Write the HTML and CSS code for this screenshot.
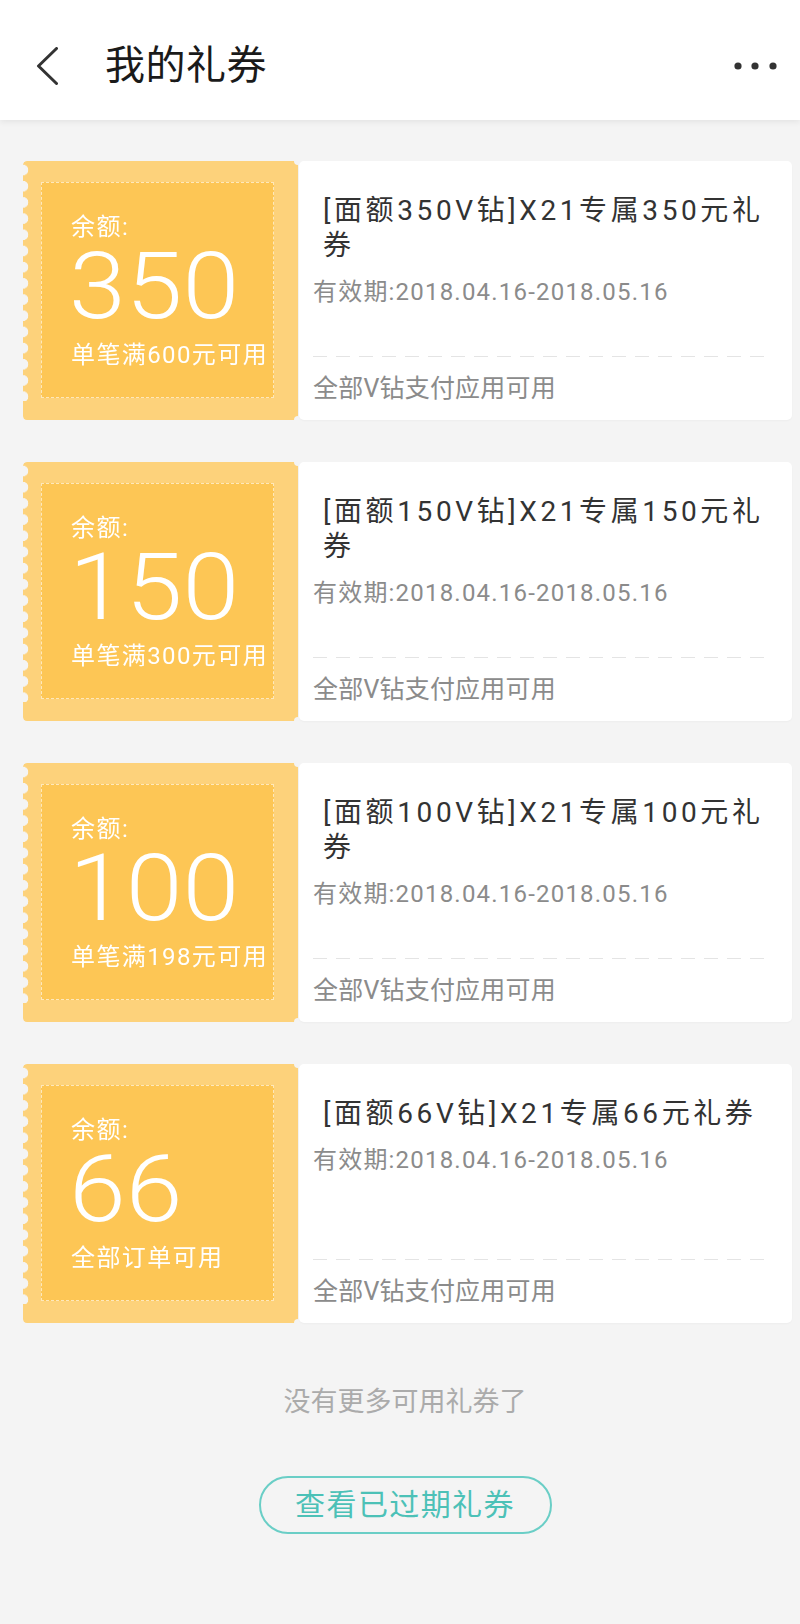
FILE: index.html
```html
<!DOCTYPE html>
<html lang="zh-CN">
<head>
<meta charset="utf-8">
<title>我的礼券</title>
<link rel="stylesheet" href="styles.css">
</head>
<body>
<header class="topbar">
  <svg class="back" width="22" height="38" viewBox="0 0 22 38"><path d="M20.5 1.5 L2.5 19 L20.5 36.5" fill="none" stroke="#333" stroke-width="3" stroke-linecap="round" stroke-linejoin="round"/></svg>
  <h1 class="page-title">我的礼券</h1>
  <svg class="more" width="43" height="8" viewBox="0 0 43 8"><circle cx="4" cy="4" r="3.6" fill="#333"/><circle cx="21" cy="4" r="3.6" fill="#333"/><circle cx="39" cy="4" r="3.6" fill="#333"/></svg>
</header>

<main class="list">
  <div class="ticket">
    <div class="stub">
      <div class="stub-inner">
        <div class="label">余额:</div>
        <div class="amount">350</div>
        <div class="cond">单笔满600元可用</div>
      </div>
    </div>
    <div class="info">
      <div class="name">[面额350V钻]X21专属350元礼券</div>
      <div class="date">有效期:2018.04.16-2018.05.16</div>
      <div class="spacer"></div>
      <div class="rule"></div>
      <div class="foot">全部V钻支付应用可用</div>
    </div>
  </div>

  <div class="ticket">
    <div class="stub">
      <div class="stub-inner">
        <div class="label">余额:</div>
        <div class="amount">150</div>
        <div class="cond">单笔满300元可用</div>
      </div>
    </div>
    <div class="info">
      <div class="name">[面额150V钻]X21专属150元礼券</div>
      <div class="date">有效期:2018.04.16-2018.05.16</div>
      <div class="spacer"></div>
      <div class="rule"></div>
      <div class="foot">全部V钻支付应用可用</div>
    </div>
  </div>

  <div class="ticket">
    <div class="stub">
      <div class="stub-inner">
        <div class="label">余额:</div>
        <div class="amount">100</div>
        <div class="cond">单笔满198元可用</div>
      </div>
    </div>
    <div class="info">
      <div class="name">[面额100V钻]X21专属100元礼券</div>
      <div class="date">有效期:2018.04.16-2018.05.16</div>
      <div class="spacer"></div>
      <div class="rule"></div>
      <div class="foot">全部V钻支付应用可用</div>
    </div>
  </div>

  <div class="ticket">
    <div class="stub">
      <div class="stub-inner">
        <div class="label">余额:</div>
        <div class="amount">66</div>
        <div class="cond">全部订单可用</div>
      </div>
    </div>
    <div class="info">
      <div class="name">[面额66V钻]X21专属66元礼券</div>
      <div class="date">有效期:2018.04.16-2018.05.16</div>
      <div class="spacer"></div>
      <div class="rule"></div>
      <div class="foot">全部V钻支付应用可用</div>
    </div>
  </div>
</main>

<section class="bottom">
  <div class="end">没有更多可用礼券了</div>
  <a class="expired-btn">查看已过期礼券</a>
</section>
</body>
</html>
```

FILE: styles.css
```css
html, body {
  margin: 0;
  padding: 0;
}

body {
  background: #f4f4f4;
  font-family: Roboto, "Noto Sans CJK SC", "Noto Sans", sans-serif;
  width: 800px;
  min-height: 1624px;
}

/* ---------- header ---------- */
.topbar {
  position: relative;
  z-index: 1;
  height: 120px;
  box-sizing: border-box;
  padding: 12px 23px 0 36px;
  background: #fff;
  display: flex;
  align-items: center;
  box-shadow: 0 2px 6px rgba(0, 0, 0, 0.07);
}

.back {
  flex: none;
  display: block;
}

.page-title {
  flex: 1;
  margin: 0 0 0 47px;
  font-size: 40px;
  font-weight: 400;
  line-height: 1;
  letter-spacing: 0.5px;
  color: #1a1a1a;
}

.more {
  flex: none;
  display: block;
}

/* ---------- list ---------- */
.list {
  padding: 41px 8px 0 23px;
  display: flex;
  flex-direction: column;
  gap: 42px;
}

.ticket {
  display: flex;
  height: 259px;
}

.stub {
  position: relative;
  flex: none;
  width: 275px;
  box-sizing: border-box;
  padding: 21px 24px 22px 18px;
  background: #fdd27b;
  border-radius: 4px 0 0 4px;
  -webkit-mask-image: radial-gradient(circle at 0 9px, transparent 5px, #000 5.6px), linear-gradient(#000, #000), linear-gradient(#000, #000);
  -webkit-mask-size: 100% 16.2px, 100% 19px, calc(100% - 6px) 100%;
  -webkit-mask-position: 0 0, 0 100%, 100% 0;
  -webkit-mask-repeat: repeat-y, no-repeat, no-repeat;
  mask-image: radial-gradient(circle at 0 9px, transparent 5px, #000 5.6px), linear-gradient(#000, #000), linear-gradient(#000, #000);
  mask-size: 100% 16.2px, 100% 19px, calc(100% - 6px) 100%;
  mask-position: 0 0, 0 100%, 100% 0;
  mask-repeat: repeat-y, no-repeat, no-repeat;
}

.stub::before,
.stub::after {
  content: "";
  position: absolute;
  right: -4px;
  width: 8px;
  height: 8px;
  border-radius: 50%;
  background: #f4f4f4;
}

.stub::before { top: -4px; }
.stub::after { bottom: -4px; }

.stub-inner {
  height: 100%;
  box-sizing: border-box;
  padding: 29px 0 0 29px;
  background: #fdc655;
  border: 1px dashed rgba(255, 255, 255, 0.6);
  color: #fff;
}

.label {
  font-size: 24px;
  line-height: 30px;
  letter-spacing: 1.5px;
}

.amount {
  margin-left: -2px;
  font-size: 93px;
  font-weight: 300;
  line-height: 90px;
  letter-spacing: 0;
  transform: scaleX(1.1);
  transform-origin: 0 50%;
}

.cond {
  margin-top: 8px;
  font-size: 24px;
  line-height: 30px;
  letter-spacing: 1.4px;
  white-space: nowrap;
}

.info {
  position: relative;
  flex: 1;
  margin-left: 1px;
  box-sizing: border-box;
  padding: 32px 20px 0 14px;
  background: #fff;
  border-radius: 5px;
  display: flex;
  flex-direction: column;
  box-shadow: 0 1px 2px rgba(0, 0, 0, 0.03);
}

.name {
  padding-left: 10px;
  font-size: 28px;
  line-height: 35px;
  letter-spacing: 3.6px;
  color: #333;
}

.date {
  margin-top: 14px;
  font-size: 24px;
  line-height: 30px;
  letter-spacing: 1.2px;
  color: #8b8b8b;
  white-space: nowrap;
}

.spacer {
  flex: 1;
}

.rule {
  height: 1px;
  background: repeating-linear-gradient(90deg, #e4e4e4 0 14px, transparent 14px 23px);
}

.foot {
  height: 63px;
  font-size: 25px;
  line-height: 63px;
  letter-spacing: 0.2px;
  color: #8b8b8b;
}

/* ---------- bottom ---------- */
.bottom {
  padding: 59px 0 0 10px;
  display: flex;
  flex-direction: column;
  align-items: center;
}

.end {
  font-size: 27px;
  line-height: 40px;
  color: #ababab;
}

.expired-btn {
  margin-top: 54px;
  width: 293px;
  height: 58px;
  box-sizing: border-box;
  border: 2px solid #6acec6;
  border-radius: 29px;
  font-size: 30px;
  line-height: 54px;
  letter-spacing: 1.4px;
  text-align: center;
  color: #4cc1b7;
}
```
